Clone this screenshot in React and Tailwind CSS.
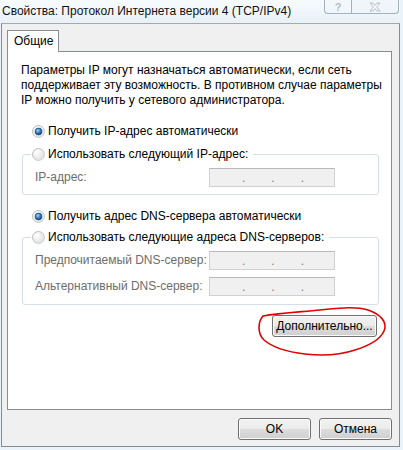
import React from 'react';

const font = "font-['Liberation_Sans',Arial,sans-serif]";

const Radio = ({ checked }) => (
  <svg width="13" height="13" viewBox="0 0 13 13" className="shrink-0">
    <defs>
      <linearGradient id="rOuter" x1="0" y1="0" x2="1" y2="1">
        <stop offset="0" stopColor="#b3b3b3" />
        <stop offset="1" stopColor="#d7d7d7" />
      </linearGradient>
      <radialGradient id="rFill" cx="0.35" cy="0.3" r="0.8">
        <stop offset="0" stopColor="#ffffff" />
        <stop offset="1" stopColor="#dcdcdc" />
      </radialGradient>
      <radialGradient id="rDot" cx="0.4" cy="0.35" r="0.7">
        <stop offset="0" stopColor="#9ed4f6" />
        <stop offset="0.55" stopColor="#2d7cc4" />
        <stop offset="1" stopColor="#123f70" />
      </radialGradient>
    </defs>
    <circle cx="6.5" cy="6.5" r="6" fill="url(#rFill)" stroke="url(#rOuter)" />
    {checked && <circle cx="6.5" cy="6.5" r="3.4" fill="url(#rDot)" stroke="#1c3f66" strokeWidth="0.7" />}
  </svg>
);

const RadioRow = ({ checked, children }) => (
  <div className="flex items-center gap-[3px] h-[15px]">
    <Radio checked={checked} />
    <span>{children}</span>
  </div>
);

const IpBox = () => (
  <div className="w-[126px] h-[19px] border border-[#d0d0d0] border-t-[#b9b9b9] bg-[#f0f0f0] flex items-end pl-[32px] gap-[26px] pb-[2px] text-[#7a7a7a] leading-[12px]">
    <span>.</span>
    <span>.</span>
    <span>.</span>
  </div>
);

const Field = ({ label }) => (
  <div className="flex items-center">
    <span className="w-[174px] text-[#6d6d6d]">{label}</span>
    <IpBox />
  </div>
);

const WinButton = ({ className, children }) => (
  <button
    className={`h-[22px] rounded-[3px] border border-[#707070] bg-[linear-gradient(to_bottom,#f2f2f2_0%,#ebebeb_50%,#dddddd_50%,#cfcfcf_100%)] shadow-[inset_0_0_0_1px_#fbfbfb] text-black text-[12px] ${className}`}
  >
    {children}
  </button>
);

export default function App() {
  return (
    <div className={`relative w-[403px] h-[450px] overflow-hidden bg-[#eaf3f9] text-[12px] leading-[15px] text-black ${font}`}>
      <div className="w-[400px] flex flex-col">
        {/* title bar */}
        <div className="h-[23px] flex justify-between items-start bg-[linear-gradient(to_bottom,#f7fbfd,#e8f1f8)]">
          <div className="pl-[2px] pt-[4px] text-[12px] text-[#111]">Свойства: Протокол Интернета версии 4 (TCP/IPv4)</div>
          <div className="flex mr-[1px]">
            <div className="w-[28px] h-[14px] rounded-bl-[4px] border border-t-0 border-[#a4b2bd] bg-[#f1f6fa]/70 flex items-center justify-center text-[11px] font-bold text-[#b5bec6] leading-[12px]">?</div>
            <div className="w-[47px] h-[14px] rounded-br-[4px] border border-t-0 border-l-0 border-[#a4b2bd] bg-[#eef4f8]/70 flex items-center justify-center">
              <svg width="12" height="10" viewBox="0 0 12 10">
                <path d="M1 1 L4 1 L6 3.3 L8 1 L11 1 L7.6 5 L11 9 L8 9 L6 6.7 L4 9 L1 9 L4.4 5 Z" fill="#f6f8fa" stroke="#a9b3bc" strokeWidth="0.8" />
              </svg>
            </div>
          </div>
        </div>

        {/* body */}
        <div className="ml-px w-[399px] h-[424px] border border-[#7f8c96] border-t-[#a3a9ae] bg-[#f0f0f0] pl-[5px] pr-[7px] pt-[6px] flex flex-col">
          <div className="flex">
            <div className="relative z-10 -mb-px h-[22px] w-[52px] border border-b-0 border-[#898c95] bg-white pl-[6px] pt-[3px]">Общие</div>
          </div>
          <div className="h-[359px] w-[385px] border border-[#898c95] bg-white pl-[13px] pt-[11px]">
            <p>
              Параметры IP могут назначаться автоматически, если сеть
              <br />
              поддерживает эту возможность. В противном случае параметры
              <br />
              IP можно получить у сетевого администратора.
            </p>

            <div className="mt-[16px] ml-[11px]">
              <RadioRow checked>Получить IP-адрес автоматически</RadioRow>
            </div>

            <fieldset className="mt-[8px] ml-px w-[357px] border border-[#d5dfe5] rounded-[3px] pl-[8px] pb-[7px]">
              <legend className="pl-px pr-[5px]">
                <RadioRow>Использовать следующий IP-адрес:</RadioRow>
              </legend>
              <div className="mt-[6px] ml-[4px]">
                <Field label="IP-адрес:" />
              </div>
            </fieldset>

            <div className="mt-[14px] ml-[11px]">
              <RadioRow checked>Получить адрес DNS-сервера автоматически</RadioRow>
            </div>

            <fieldset className="mt-[6px] ml-px w-[357px] border border-[#d5dfe5] rounded-[3px] pl-[8px] pb-[8px]">
              <legend className="pl-px pr-[5px]">
                <RadioRow>Использовать следующие адреса DNS-серверов:</RadioRow>
              </legend>
              <div className="mt-[6px] ml-[4px] flex flex-col gap-[7px]">
                <Field label="Предпочитаемый DNS-сервер:" />
                <Field label="Альтернативный DNS-сервер:" />
              </div>
            </fieldset>

            <div className="mt-[10px] w-[356px] flex justify-end">
              <WinButton className="w-[105px]">Дополнительно...</WinButton>
            </div>
          </div>

          <div className="mt-[8px] flex justify-end gap-[8px]">
            <WinButton className="w-[73px]">OK</WinButton>
            <WinButton className="w-[73px]">Отмена</WinButton>
          </div>
        </div>
      </div>

      {/* red hand-drawn annotation */}
      <svg className="absolute left-0 top-0 pointer-events-none" width="403" height="450" viewBox="0 0 403 450">
        <path
          d="M263 316 C280 313 300 312 320 310 C340 308 355 306 368 310 C380 314 388 322 384 331 C380 340 368 346 355 350 C340 355 322 356 305 354 C288 352 272 347 264 340 C257 333 258 322 263 316"
          fill="none"
          stroke="#e00000"
          strokeWidth="1.6"
          strokeLinecap="round"
        />
      </svg>
    </div>
  );
}
